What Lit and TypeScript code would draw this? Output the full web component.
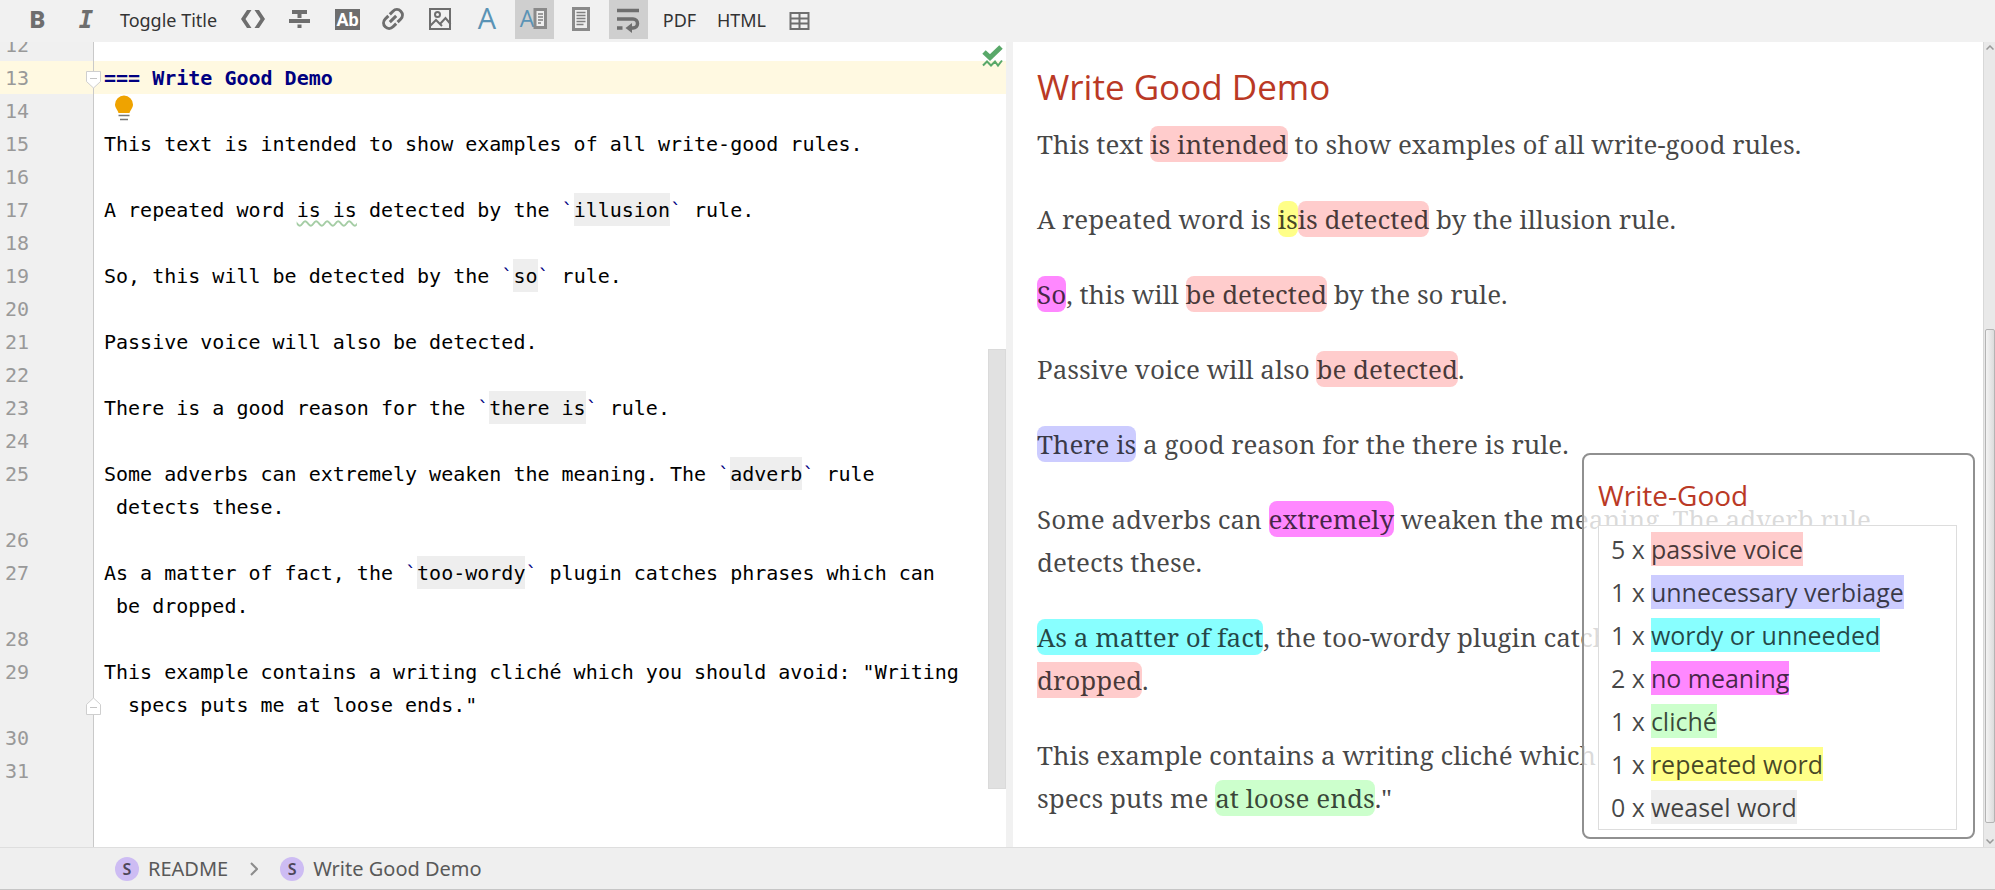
import { LitElement, html, svg, css, nothing } from "lit";
import { customElement, property } from "lit/decorators.js";
import { classMap } from "lit/directives/class-map.js";

type Kind = "passive" | "verbiage" | "wordy" | "meaningless" | "cliche" | "repeated" | "weasel";

const icons = {
  bold: svg`<text x="19.500" y="28" text-anchor="middle" class="glyph bold">B</text>`,
  italic: svg`<text x="21" y="28" text-anchor="middle" class="glyph italic">I</text>`,
  code: svg`<path d="M14 10h4.500L12.500 19l6 9H14L8 19zM26 10h-4.500l6 9-6 9H26l6-9z" fill="#6e6e6e"/>`,
  strike: svg`<path d="M12 10h15v4h-5.500v4h-4v-4H12zM9 19h21v4H9zM17.500 24.500h4v3.500h-4z" fill="#6e6e6e"/>`,
  mono: svg`<rect x="8" y="9" width="25" height="21" fill="#6e6e6e"/><text x="20.500" y="26" text-anchor="middle" class="glyph ab">Ab</text>`,
  link: svg`<g transform="rotate(-45 19 19)" class="line medium"><path d="M18 13.500h-4.500a5.500 5.500 0 0 0 0 11H18M20 13.500h4.500a5.500 5.500 0 0 1 0 11H20M14.500 19h9"/></g>`,
  image: svg`<rect x="9" y="9" width="20" height="20" class="line thin"/><circle cx="16.500" cy="14.500" r="2.500" class="line thin"/><path d="M9 26l6-6 4 4 5.500-6 5 6M19 24l2 2" class="line thin"/>`,
  editorOnly: svg`<text x="19" y="29" text-anchor="middle" class="glyph letter">A</text>`,
  split: svg`<text x="12" y="27" text-anchor="middle" class="glyph letter small">A</text><rect x="20" y="9.500" width="10.500" height="18" class="line page"/><path d="M23 14h5M23 17h5M23 20h5M23 23h3" class="line hair"/>`,
  previewOnly: svg`<rect x="11.500" y="8.500" width="15" height="21" class="line page"/><path d="M14.500 12.500h9M14.500 15.500h9M14.500 18.500h9M14.500 21.500h9M14.500 24.500h7" class="line hair"/>`,
  wrap: svg`<path d="M8 10.500h22M8 19h16a4.500 4.500 0 0 1 0 9h-3M8 28h5.500" class="line thick"/><path d="M23 23v10l-6.500-5z" fill="#6e6e6e"/>`,
  table: svg`<path d="M10.500 13h18v16h-18zM19.500 13v16M10.500 18.500h18M10.500 23.500h18" class="line thin"/>`,
};

type Tool = { label: string; icon?: unknown; size?: string; on?: boolean };
const tools: Tool[] = [
  { label: "Bold", icon: icons.bold },
  { label: "Italic", icon: icons.italic },
  { label: "Toggle Title", size: "wide" },
  { label: "Monospace", icon: icons.code },
  { label: "Strikethrough", icon: icons.strike },
  { label: "Highlight", icon: icons.mono },
  { label: "Link", icon: icons.link },
  { label: "Image", icon: icons.image },
  { label: "Editor only", icon: icons.editorOnly },
  { label: "Editor and preview", icon: icons.split, on: true },
  { label: "Preview only", icon: icons.previewOnly },
  { label: "Soft wrap", icon: icons.wrap, on: true },
  { label: "PDF", size: "narrow" },
  { label: "HTML", size: "mid" },
  { label: "Table", icon: icons.table },
];

@customElement("doc-toolbar")
export class DocToolbar extends LitElement {
  static styles = css`
    :host { display: flex; gap: 8px; height: 42px; padding-left: 18px; box-sizing: border-box; background: #f1f1f1; flex: none; }
    button { width: 39px; height: 39px; padding: 0; border: 0; background: none; color: #333; font: 18px "Noto Sans", sans-serif; white-space: nowrap; }
    button.wide { width: 113px; }
    button.narrow { width: 47px; }
    button.mid { width: 61px; }
    button.on { background: #cfcfcf; }
    svg { display: block; width: 39px; height: 39px; }
    .line { fill: none; stroke: #6e6e6e; }
    .thick { stroke-width: 3.500; }
    .medium { stroke-width: 3; }
    .thin { stroke-width: 2; }
    .hair { stroke-width: 1.500; stroke: #808080; }
    .page { stroke-width: 3; stroke: #8a8a8a; fill: #eee; }
    .glyph { fill: #6e6e6e; font-size: 24px; }
    .bold { font-family: Roboto, sans-serif; font-weight: 900; }
    .italic { font-family: "DejaVu Sans Mono", monospace; font-weight: 700; font-style: italic; }
    .ab { fill: #fff; font-family: Roboto, sans-serif; font-weight: 700; font-size: 18px; }
    .letter { fill: #5a93b5; font-family: "Open Sans", sans-serif; font-size: 29px; }
    .small { font-size: 23px; }
  `;
  render() {
    return tools.map((t) => html`<button
      type="button"
      class=${classMap({ on: !!t.on, [t.size ?? "icon"]: true })}
      aria-label=${t.label}
      aria-pressed=${t.on ? "true" : nothing}
    >${t.icon ? html`<svg viewBox="0 0 39 39" aria-hidden="true">${t.icon}</svg>` : t.label}</button>`);
  }
}

type Row = { n?: number; text?: unknown; kind?: string; fold?: "open" | "close"; bulb?: boolean };
const tick = (s: string) => html`<b class="tick">\`</b><code>${s}</code><b class="tick">\`</b>`;
const rows: Row[] = [
  { n: 12 },
  { n: 13, kind: "current", fold: "open", text: html`<strong>=== Write Good Demo</strong>` },
  { n: 14, bulb: true },
  { n: 15, text: "This text is intended to show examples of all write-good rules." },
  { n: 16 },
  { n: 17, text: html`A repeated word <span class="typo">is is</span> detected by the ${tick("illusion")} rule.` },
  { n: 18 },
  { n: 19, text: html`So, this will be detected by the ${tick("so")} rule.` },
  { n: 20 },
  { n: 21, text: "Passive voice will also be detected." },
  { n: 22 },
  { n: 23, text: html`There is a good reason for the ${tick("there is")} rule.` },
  { n: 24 },
  { n: 25, text: html`Some adverbs can extremely weaken the meaning. The ${tick("adverb")} rule` },
  { text: " detects these." },
  { n: 26 },
  { n: 27, text: html`As a matter of fact, the ${tick("too-wordy")} plugin catches phrases which can` },
  { text: " be dropped." },
  { n: 28 },
  { n: 29, text: `This example contains a writing cliché which you should avoid: "Writing` },
  { fold: "close", text: `  specs puts me at loose ends."` },
  { n: 30 },
  { n: 31 },
];

@customElement("source-editor")
export class SourceEditor extends LitElement {
  static styles = css`
    :host { display: block; position: relative; overflow: hidden; background: linear-gradient(to right, #f0f0f0 93px, #c9c9c9 93px 94px, #fff 94px); font: 20px/35px "DejaVu Sans Mono", "Liberation Mono", monospace; color: #000; }
    .rows { margin-top: -14px; }
    .row { display: grid; grid-template-columns: 94px 1fr; height: 33px; }
    .current { background: #fff9e1; }
    .gutter { position: relative; padding-left: 5px; border-right: 1px solid #c9c9c9; box-sizing: border-box; color: #999; }
    .fold { position: absolute; right: -9px; top: 9px; width: 17px; height: 19px; }
    .line { padding-left: 10px; white-space: pre; }
    strong { color: #000080; }
    .tick { color: #000080; font-weight: 400; }
    code { display: inline-block; height: 33px; background: #eee; font: inherit; }
    .typo { text-decoration: underline wavy #a5cda5 2px; text-underline-offset: 3px; text-decoration-skip-ink: none; }
    .bulb { display: block; width: 20px; height: 27px; margin-left: 9px; }
    .status { position: absolute; right: 3px; top: 3px; width: 21px; height: 23px; }
    .thumb { position: absolute; right: 0; top: 38.100%; height: 54.700%; width: 18px; box-sizing: border-box; background: #e1e1e1; border: 1px solid #dadada; }
  `;
  private fold(kind: string) {
    const d = kind === "open" ? "M1.500 1.500h14v10l-7 6.500-7-6.500z" : "M1.500 17.500h14v-10l-7-6.500-7 6.500z";
    const y = kind === "open" ? 8.5 : 10.5;
    return html`<svg class="fold" viewBox="0 0 17 19" aria-hidden="true"><path d=${d} fill="#fff" stroke="#cfcfcf"/><path d="M5 ${y}h7" stroke="#c4c4c4"/></svg>`;
  }
  render() {
    return html`
      <div class="rows">
        ${rows.map((r) => html`<div class="row ${r.kind ?? ""}"><div class="gutter">${r.n ?? ""}${r.fold ? this.fold(r.fold) : nothing}</div><div class="line">${r.bulb
          ? html`<svg class="bulb" viewBox="0 0 20 27" aria-hidden="true"><path d="M11 1.500a9 9 0 0 0-9 9c0 3.500 2.500 5 3.500 8.500h11c1-3.500 3.500-5 3.500-8.500a9 9 0 0 0-9-9z" fill="#efa300"/><path d="M5.500 21.500h11M7 25.500h8" stroke="#777" stroke-width="1.500"/></svg>`
          : r.text ?? ""}</div></div>`)}
      </div>
      <svg class="status" viewBox="0 0 21 23" aria-hidden="true">
        <path d="M2 7l6 5.500L19 2" fill="none" stroke="#59a869" stroke-width="5"/>
        <path d="M1 20.500l4-4 4 4 4-4 3 4 4-5" fill="none" stroke="#59a869" stroke-width="2"/>
      </svg>
      <div class="thumb"></div>
    `;
  }
}

const m = (k: Kind, s: string) => html`<mark class=${k}>${s}</mark>`;
const paragraphs = [
  html`This text ${m("passive", "is intended")} to show examples of all write-good rules.`,
  html`A repeated word is ${m("repeated", "is")}${m("passive", "is detected")} by the illusion rule.`,
  html`${m("meaningless", "So")}, this will ${m("passive", "be detected")} by the so rule.`,
  html`Passive voice will also ${m("passive", "be detected")}.`,
  html`${m("verbiage", "There is")} a good reason for the there is rule.`,
  html`Some adverbs can ${m("meaningless", "extremely")} weaken the meaning. The adverb rule detects these.`,
  html`${m("wordy", "As a matter of fact")}, the too-wordy plugin catches phrases which can ${m("passive", "be dropped")}.`,
  html`This example contains a writing cliché which you should avoid: "Writing specs puts me ${m("cliche", "at loose ends")}."`,
];
const summary: [number, Kind, string][] = [
  [5, "passive", "passive voice"],
  [1, "verbiage", "unnecessary verbiage"],
  [1, "wordy", "wordy or unneeded"],
  [2, "meaningless", "no meaning"],
  [1, "cliche", "cliché"],
  [1, "repeated", "repeated word"],
  [0, "weasel", "weasel word"],
];

@customElement("doc-preview")
export class DocPreview extends LitElement {
  static styles = css`
    :host { display: grid; grid-template-columns: 1fr 12px; min-width: 0; background: #fff; overflow: hidden; }
    .page { position: relative; overflow: hidden; padding: 21px 35px 0 24px; color: rgba(0, 0, 0, 0.73); font: 26px/43px "Noto Serif", "Droid Serif", "DejaVu Serif Condensed", serif; }
    h1, h2 { margin: 0; font-family: "Open Sans", sans-serif; font-weight: 400; color: #ba3925; }
    h1 { font-size: 35px; line-height: 48px; margin-bottom: 12px; }
    p { margin: 0 0 32px; }
    mark { color: inherit; border-radius: 8px; }
    .passive { background: #fcc; }
    .verbiage { background: #ccf; }
    .wordy { background: #8ff; }
    .meaningless { background: #f8f; }
    .cliche { background: #cfc; }
    .repeated { background: #ff8; }
    .weasel { background: #eee; }
    .legend { position: absolute; right: 8px; bottom: 8px; width: 393px; box-sizing: border-box; padding: 20px 16px 7px 14px; border: 2px solid #909090; border-radius: 8px; background: rgba(255, 255, 255, 0.8); font-family: "Open Sans", sans-serif; }
    h2 { font-size: 28px; line-height: 40px; margin-bottom: 10px; }
    table { width: 100%; padding-top: 2px; border-collapse: separate; border-spacing: 0; border: 1px solid #ddd; background: #fff; font-size: 25px; line-height: 43px; }
    th, td { padding: 0; font-weight: 400; text-align: left; white-space: nowrap; }
    th { width: 1px; padding: 0 6px 0 12px; }
    td mark { border-radius: 0; }
    .scroll { display: grid; grid-template-rows: 10px 277fr 494fr 24px; padding-left: 1px; background: #e9e9e9; border-left: 1px solid #d8d8d8; }
    .bar { grid-row: 3; border: 1px solid #b4b4b4; border-radius: 2px; background: linear-gradient(to right, #f4f4f4, #dcdcdc); }
    .arrow { justify-self: center; width: 8px; height: 5px; fill: none; stroke: #999; stroke-width: 1.500; }
    .up { grid-row: 1; align-self: center; }
    .down { grid-row: 4; align-self: end; margin-bottom: 3px; }
  `;
  render() {
    return html`
      <div class="page">
        <h1>Write Good Demo</h1>
        ${paragraphs.map((p) => html`<p>${p}</p>`)}
        <aside class="legend">
          <h2>Write-Good</h2>
          <table>
            <tbody>
              ${summary.map(([n, k, s]) => html`<tr><th scope="row">${n} x</th><td>${m(k, s)}</td></tr>`)}
            </tbody>
          </table>
        </aside>
      </div>
      <div class="scroll">
        <svg class="arrow up" viewBox="0 0 8 5" aria-hidden="true"><path d="M.5 4.500 4 1l3.500 3.500"/></svg>
        <div class="bar"></div>
        <svg class="arrow down" viewBox="0 0 8 5" aria-hidden="true"><path d="M.5.500 4 4 7.500.500"/></svg>
      </div>
    `;
  }
}

@customElement("doc-crumbs")
export class DocCrumbs extends LitElement {
  @property({ attribute: false }) items: string[] = [];
  static styles = css`
    :host { display: block; flex: none; background: #efefef; border-top: 1px solid #dedede; border-bottom: 1px solid #c6c6c6; }
    nav { display: flex; align-items: center; gap: 22px; height: 41px; padding-left: 115px; font: 20px "Noto Sans", sans-serif; }
    a { display: flex; align-items: center; gap: 9px; color: #595959; text-decoration: none; }
    .dot { display: grid; place-items: center; width: 24px; height: 24px; border-radius: 50%; background: #cdbcf3; color: #4d4659; font-size: 16px; font-weight: 600; line-height: 24px; }
    svg { width: 8px; height: 14px; fill: none; stroke: #8c8c8c; stroke-width: 2; }
  `;
  render() {
    return html`<nav aria-label="Breadcrumb">
      ${this.items.map((s, i) => html`${i ? html`<svg viewBox="0 0 8 14" aria-hidden="true"><path d="M1 1l6 6-6 6"/></svg>` : nothing}<a href="#"><span class="dot">S</span>${s}</a>`)}
    </nav>`;
  }
}

@customElement("app-root")
export class AppRoot extends LitElement {
  static styles = css`
    :host { display: flex; flex-direction: column; height: 100vh; background: #f1f1f1; }
    main { flex: 1; min-height: 0; display: grid; grid-template-columns: minmax(0, 1006fr) minmax(0, 982fr); grid-template-rows: minmax(0, 1fr); gap: 7px; }
  `;
  render() {
    return html`
      <doc-toolbar role="toolbar"></doc-toolbar>
      <main>
        <source-editor></source-editor>
        <doc-preview></doc-preview>
      </main>
      <doc-crumbs .items=${["README", "Write Good Demo"]}></doc-crumbs>
    `;
  }
}
